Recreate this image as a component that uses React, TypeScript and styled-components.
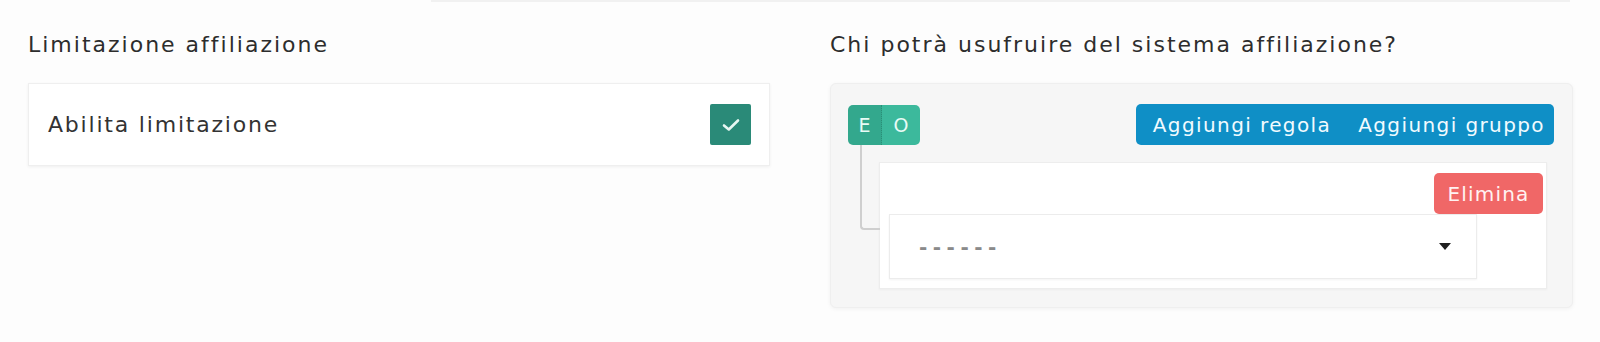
import React from 'react';
import styled, { createGlobalStyle } from 'styled-components';

const GlobalStyle = createGlobalStyle`
  html, body {
    margin: 0;
    padding: 0;
    background: #fdfdfd;
  }
  body {
    font-family: "DejaVu Sans", "Liberation Sans", sans-serif;
    color: #2b2b2b;
  }
`;

const Shell = styled.div`
  height: 342px;
  overflow: hidden;
`;

const TopEdge = styled.div`
  height: 2px;
  margin: 0 30px 0 431px;
  background: #f1f1f1;
`;

const Page = styled.div`
  display: grid;
  grid-template-columns: 742px 743px;
  column-gap: 60px;
  padding: 28px 27px 0 28px;
`;

const Column = styled.div`
  display: flex;
  flex-direction: column;
`;

const Title = styled.h3`
  margin: 0 0 23px 0;
  font-size: 22px;
  letter-spacing: 2px;
  font-weight: 400;
  line-height: 30px;
  color: #2d2d2d;
`;

const ToggleCard = styled.label`
  display: flex;
  align-items: center;
  justify-content: space-between;
  height: 83px;
  box-sizing: border-box;
  padding: 0 18px 0 19px;
  background: #ffffff;
  border: 1px solid #efefef;
  box-shadow: 0 1px 3px rgba(0, 0, 0, 0.06);
  font-size: 22px;
  letter-spacing: 1.8px;
  color: #333;
`;

const CheckBox = styled.span`
  display: flex;
  align-items: center;
  justify-content: center;
  width: 41px;
  height: 41px;
  background: #2a8a78;
  border-radius: 2px;
`;

const BuilderCard = styled.div`
  background: #f6f6f6;
  border: 1px solid #efefef;
  border-radius: 6px;
  box-shadow: 0 1px 4px rgba(0, 0, 0, 0.05);
  padding: 20px 18px 19px 17px;
  height: 225px;
  box-sizing: border-box;
`;

const GroupHeader = styled.div`
  display: flex;
  align-items: center;
  justify-content: space-between;
  height: 41px;
`;

const Conjunction = styled.div`
  position: relative;
  display: flex;
  height: 40px;
  border-radius: 5px;

  &::after {
    content: '';
    position: absolute;
    left: 12px;
    top: 40px;
    width: 18px;
    height: 83px;
    border-left: 2px solid #cfcfcf;
    border-bottom: 2px solid #cfcfcf;
    border-bottom-left-radius: 4px;
  }
`;

const ConjButton = styled.span<{ $active?: boolean; $first?: boolean }>`
  display: flex;
  align-items: center;
  justify-content: center;
  width: ${p => (p.$first ? '33px' : '38px')};
  background: ${p => (p.$active ? '#33a88d' : '#3cb99c')};
  color: #e9fbf6;
  font-size: 19px;
  border-radius: ${p => (p.$first ? '5px 0 0 5px' : '0 5px 5px 0')};
  border-right: ${p => (p.$first ? '1px dotted #2a8f77' : 'none')};
`;

const ActionGroup = styled.div`
  display: flex;
  height: 41px;
  border-radius: 5px;
  overflow: hidden;
  background: #0f8fc6;
`;

const ActionButton = styled.span`
  display: flex;
  align-items: center;
  padding: 0 13px 0 17px;
  color: #f2fbff;
  font-size: 20px;
  letter-spacing: 1.4px;
  &:last-child {
    padding: 0 9px 0 14px;
  }
`;

const RuleList = styled.div`
  margin: 17px 7px 0 31px;
`;

const Rule = styled.div`
  background: #ffffff;
  border: 1px solid #ededed;
  box-shadow: 0 1px 2px rgba(0, 0, 0, 0.04);
  height: 127px;
  box-sizing: border-box;
  padding: 10px 3px 0 9px;
  display: flex;
  flex-direction: column;
`;

const RuleHeader = styled.div`
  display: flex;
  justify-content: flex-end;
`;

const DeleteButton = styled.span`
  display: flex;
  align-items: center;
  justify-content: center;
  width: 109px;
  height: 41px;
  background: #f06767;
  color: #fff2f2;
  border-radius: 5px;
  font-size: 20px;
  letter-spacing: 1.2px;
`;

const Select = styled.div`
  display: flex;
  align-items: center;
  justify-content: space-between;
  width: 588px;
  height: 65px;
  box-sizing: border-box;
  padding: 0 25px 0 29px;
  background: #ffffff;
  border: 1px solid #ececec;
  box-shadow: 0 1px 2px rgba(0, 0, 0, 0.05);
  color: #8a8a8a;
  font-size: 20px;
  font-weight: 700;
  letter-spacing: 5.5px;
`;

const Caret = styled.span`
  width: 0;
  height: 0;
  border-left: 6px solid transparent;
  border-right: 6px solid transparent;
  border-top: 7px solid #1f1f1f;
`;

export default function App() {
  return (
    <>
      <GlobalStyle />
      <Shell>
        <TopEdge />
        <Page>
          <Column>
            <Title>Limitazione affiliazione</Title>
            <ToggleCard>
              Abilita limitazione
              <CheckBox>
                <svg width="18" height="14" viewBox="0 0 18 14" fill="none">
                  <path d="M2 7.5 L6.8 11.5 L16 2.5" stroke="#e8f7f3" strokeWidth="2.6" strokeLinecap="round" strokeLinejoin="round" />
                </svg>
              </CheckBox>
            </ToggleCard>
          </Column>
          <Column>
            <Title>Chi potrà usufruire del sistema affiliazione?</Title>
            <BuilderCard>
              <GroupHeader>
                <Conjunction>
                  <ConjButton $first $active>E</ConjButton>
                  <ConjButton>O</ConjButton>
                </Conjunction>
                <ActionGroup>
                  <ActionButton>Aggiungi regola</ActionButton>
                  <ActionButton>Aggiungi gruppo</ActionButton>
                </ActionGroup>
              </GroupHeader>
              <RuleList>
                <Rule>
                  <RuleHeader>
                    <DeleteButton>Elimina</DeleteButton>
                  </RuleHeader>
                  <Select>
                    <span>------</span>
                    <Caret />
                  </Select>
                </Rule>
              </RuleList>
            </BuilderCard>
          </Column>
        </Page>
      </Shell>
    </>
  );
}
